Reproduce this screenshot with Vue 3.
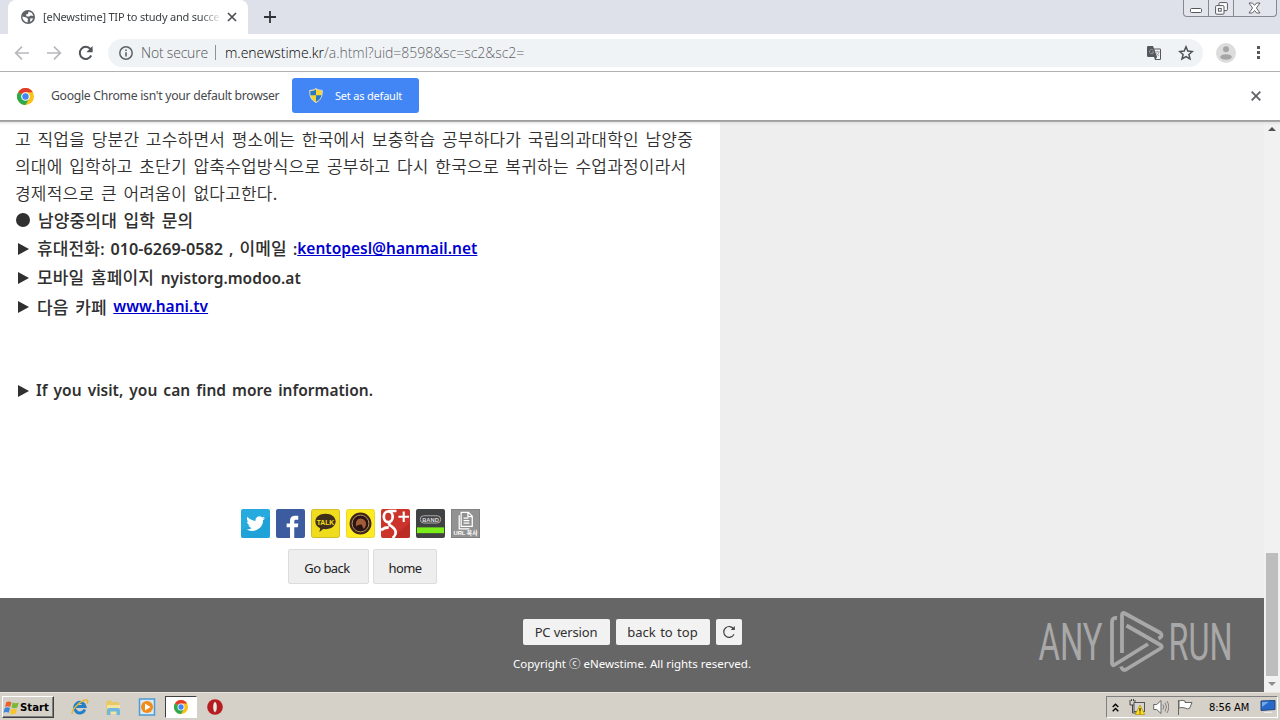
<template>
  <div class="screen">
    <header class="tab-strip">
      <div class="tab">
        <svg class="globe" viewBox="0 0 16 16" width="16" height="16">
          <circle cx="8" cy="8" r="7" fill="#5f6368" />
          <path d="M8.500 2.600 12 4l1.300 3-2.600-.6-1.500 1.200-2.400-.2-1-1.600 2.300-1zM2.400 7.400l4 1.200 1.800 1.600-.6 1.400.3 2-2.700-.8-2.400-2.600zM10.400 9.200l2.800.2-1.600 2.600-1.600.8z" fill="#fff" />
        </svg>
        <span class="tab-title">[eNewstime] TIP to study and succe</span>
        <svg class="tab-close" viewBox="0 0 10 10" width="10" height="10">
          <path d="M1 1l8 8M9 1l-8 8" stroke="#4b4e52" stroke-width="1.7" />
        </svg>
      </div>
      <svg class="new-tab" viewBox="0 0 12 12" width="12" height="12">
        <path d="M6 0v12M0 6h12" stroke="#303338" stroke-width="1.8" />
      </svg>
      <div class="window-buttons">
        <span class="win-btn min">
          <svg viewBox="0 0 12 5" width="12" height="5"><rect x=".5" y=".5" width="11" height="4" rx="1" fill="#fff" stroke="#53565d" /></svg>
        </span>
        <span class="win-btn max">
          <svg viewBox="0 0 13 13" width="13" height="13">
            <rect x="4" y=".6" width="8.400" height="8" rx="1" fill="#fff" stroke="#53565d" />
            <rect x=".6" y="3.600" width="8.400" height="8.600" rx="1" fill="#fff" stroke="#53565d" />
            <rect x="3.400" y="6.400" width="2.800" height="2.800" fill="#fff" stroke="#53565d" />
          </svg>
        </span>
        <span class="win-btn cls">
          <svg viewBox="0 0 13 12" width="13" height="12">
            <path d="M1 1h3.400l2.100 2.400L8.600 1H12L8.400 6l3.600 5H8.600L6.500 8.500 4.400 11H1l3.600-5z" fill="#fff" stroke="#53565d" stroke-width=".9" />
          </svg>
        </span>
      </div>
    </header>

    <div class="toolbar">
      <svg class="nav-icon" viewBox="0 0 16 16" width="16" height="16">
        <path d="M15 8H2M8 1.700 1.700 8 8 14.300" fill="none" stroke="#b6b8bb" stroke-width="1.700" />
      </svg>
      <svg class="nav-icon" viewBox="0 0 16 16" width="16" height="16">
        <path d="M1 8h13M8 1.700 14.300 8 8 14.300" fill="none" stroke="#b6b8bb" stroke-width="1.700" />
      </svg>
      <svg class="nav-icon" viewBox="0 0 16 16" width="16" height="16">
        <path d="M13.200 10.500A6 6 0 1 1 12.400 4" fill="none" stroke="#505357" stroke-width="2" />
        <path d="M14.600 1v6.200H8.400z" fill="#505357" />
      </svg>
      <div class="omnibox">
        <svg viewBox="0 0 14 14" width="14" height="14">
          <circle cx="7" cy="7" r="6.200" fill="none" stroke="#5f6368" stroke-width="1.500" />
          <path d="M7 6.200v4.200M7 3.400v1.600" stroke="#5f6368" stroke-width="1.600" />
        </svg>
        <span class="not-secure">Not secure</span>
        <span class="divider"></span>
        <span class="url"><b>m.enewstime.kr</b><i>/a.html?uid=8598&amp;sc=sc2&amp;sc2=</i></span>
        <svg class="translate" viewBox="0 0 14 14" width="14" height="14">
          <path d="M1.200 0H6l1 2.600h5.800a1.200 1.200 0 0 1 1.200 1.200v9A1.200 1.200 0 0 1 12.800 14H8l-1-3H1.200A1.200 1.200 0 0 1 0 9.800V1.200A1.200 1.200 0 0 1 1.200 0z" fill="#54575c" />
          <path d="M7.400 3.500H13V13H8.800l1.300-2z" fill="#f1f3f4" />
          <path d="M6.200 4.200a2.100 2.100 0 1 0 .5 1.900H4.800M8.200 5.800h4.400M10.400 4.800v1M12 6c-.5 2-1.500 3-3 4M9 6.500c.5 1.500 1.500 2.500 3 3.500" fill="none" stroke="#999ca0" stroke-width=".9" />
        </svg>
        <svg class="star" viewBox="0 0 16 16" width="16" height="16">
          <path d="M8 1.800l1.800 4.300 4.600.4-3.500 3 1.100 4.500L8 11.600 4 14l1.100-4.500-3.500-3 4.600-.4z" fill="none" stroke="#4d5156" stroke-width="1.500" />
        </svg>
      </div>
      <svg class="avatar" viewBox="0 0 20 20" width="20" height="20">
        <circle cx="10" cy="10" r="10" fill="#dcdcdc" />
        <circle cx="10" cy="6.200" r="3" fill="#a5a5a5" />
        <ellipse cx="10" cy="14" rx="5.800" ry="2.800" fill="#a5a5a5" />
      </svg>
      <svg class="menu-dots" viewBox="0 0 3 13" width="3" height="13">
        <path d="M0 0h3v3H0zM0 5h3v3H0zM0 10h3v3H0z" fill="#55585c" />
      </svg>
    </div>

    <div class="infobar">
      <svg viewBox="0 0 18 18" width="17" height="17">
        <circle cx="9" cy="9" r="9" fill="#fbc116" />
        <path d="M9 9 1.200 4.500A9 9 0 0 1 16.800 4.500H9z" fill="#e33b2e" />
        <path d="M1.200 4.500A9 9 0 0 0 9 18l3.900-6.800L9 9z" fill="#2da94f" />
        <circle cx="9" cy="9" r="4.600" fill="#fff" />
        <circle cx="9" cy="9" r="3.400" fill="#4285f4" />
      </svg>
      <span class="infobar-text">Google Chrome isn't your default browser</span>
      <button class="default-btn">
        <svg viewBox="0 0 14 15" width="14" height="15">
          <path d="M7 .5C5 2 3 2.300.800 2.300.500 8 2 12 7 14.500 12 12 13.500 8 13.200 2.300 11 2.300 9 2 7 .500z" fill="#f7d42f" stroke="#d6dbe0" />
          <path d="M7 1.600V7.300H1.500C1.200 6 1.300 4.500 1.400 3.200 3.600 3 5.400 2.700 7 1.600zM7 7.300h5.600C12 10 10 12.300 7 13.800z" fill="#2878c8" />
        </svg>
        <span>Set as default</span>
      </button>
      <svg class="infobar-close" viewBox="0 0 10 10" width="10" height="10">
        <path d="M.7.700l8.600 8.600M9.300.700.700 9.300" stroke="#606367" stroke-width="1.900" />
      </svg>
    </div>

    <div class="viewport">
      <div class="page">
        <div class="page-body">
          <main class="article">
            <p class="line">고 직업을 당분간 고수하면서 평소에는 한국에서 보충학습 공부하다가 국립의과대학인 남양중</p>
            <p class="line">의대에 입학하고 초단기 압축수업방식으로 공부하고 다시 한국으로 복귀하는 수업과정이라서</p>
            <p class="line">경제적으로 큰 어려움이 없다고한다.</p>
            <p class="line bold first"><span class="bullet"></span><span>남양중의대 입학 문의</span></p>
            <p class="line bold tall"><span class="arrow"></span><span>휴대전화<em>: </em><em class="phone">010-6269-0582</em><em> , </em>이메일<em> :</em></span><a>kentopesl@hanmail.net</a></p>
            <p class="line bold tall"><span class="arrow"></span><span>모바일 홈페이지 <em>nyistorg.modoo.at</em></span></p>
            <p class="line bold tall"><span class="arrow"></span><span>다음 카페 </span><a>www.hani.tv</a></p>
            <p class="line bold tall visit"><span class="arrow"></span><em>If you visit, you can find more information.</em></p>

            <div class="share">
              <svg v-for="item in shares" :key="item" class="share-icon" viewBox="0 0 30 30" width="29" height="29">
                <template v-if="item === 'twitter'">
                  <rect width="30" height="30" rx="2" fill="#27abdf" />
                  <path d="M0 22 30 8v20a2 2 0 0 1-2 2H2a2 2 0 0 1-2-2z" fill="#189ad2" opacity=".5" />
                  <path d="M24 9.300c-.8.400-1.500.500-2.300.600.8-.5 1.400-1.200 1.600-2.100-.7.400-1.500.7-2.400.9a4.100 4.100 0 0 0-6.900 3.600c-3.300-.2-6.300-1.700-8.300-4.200-1.100 2-.4 4.100 1.200 5.300-.6 0-1.200-.2-1.700-.5 0 1.900 1.400 3.500 3.200 3.900-.6.200-1.200.2-1.800.1.500 1.500 2 2.700 3.700 2.700A8 8 0 0 1 4.500 21c6.700 4.200 17.200.5 17.400-9.500.8-.6 1.500-1.300 2.100-2.200z" transform="translate(1)" fill="#fff" />
                </template>
                <template v-else-if="item === 'facebook'">
                  <rect width="30" height="30" rx="2" fill="#3d5b9f" />
                  <path d="M14.500 30V19H11v-4h3.500v-2.800c0-3.400 2-5.200 5.200-5.200H23v4h-2.300c-1.400 0-1.800.7-1.800 1.900V15h4.200l-.6 4h-3.600v11z" fill="#fff" />
                </template>
                <template v-else-if="item === 'talk'">
                  <rect x=".5" y=".5" width="29" height="29" rx="2" fill="#f0dc1e" stroke="#d0bb20" />
                  <path d="M15 5c-6.200 0-10.500 3.500-10.500 8 0 3.500 2 5.700 5 6.800l-.8 4 4-3c7.500.8 12.800-2.800 12.800-7.800 0-4.500-4.300-8-10.500-8z" fill="#40301b" />
                  <text x="15" y="16.500" text-anchor="middle" class="talk-label">TALK</text>
                </template>
                <template v-else-if="item === 'story'">
                  <rect x=".5" y=".5" width="29" height="29" rx="2" fill="#ffec20" stroke="#e8d538" />
                  <circle cx="15" cy="15" r="11.300" fill="#40251c" />
                  <circle cx="15" cy="15" r="8.700" fill="#2a1512" stroke="#b79463" stroke-width="1" />
                  <path d="M10.500 18c-1-5 1.500-8.500 5.500-8 3.500.5 5.500 4 4.500 7-.5 2-1.500 3-2.500 3.500l-1.500-4c-2-1-4 0-6 1.500z" fill="#a35c38" />
                </template>
                <template v-else-if="item === 'gplus'">
                  <rect width="30" height="30" rx="2" fill="#cc342b" />
                  <path d="M12 30h16a2 2 0 0 0 2-2V14z" fill="#af2821" opacity=".6" />
                  <g fill="none" stroke="#fff">
                    <ellipse cx="7.500" cy="8" rx="4.600" ry="5.600" stroke-width="2.800" />
                    <path d="M8 2h8M10 13c-3 2-2 3 1 5 6 4 5 9 1 12M8 19c-4 0-6 1-8 3" stroke-width="2.700" />
                    <path d="M23.500 2.500v11M18 8h11" stroke-width="2.200" />
                  </g>
                </template>
                <template v-else-if="item === 'band'">
                  <rect width="30" height="30" rx="2" fill="#414244" />
                  <rect x="1" y="19" width="28" height="6" fill="#7bed18" />
                  <rect x="4.500" y="7" width="21" height="7.500" rx="3.500" fill="none" stroke="#bbb" stroke-width=".9" />
                  <text x="15" y="13" text-anchor="middle" class="band-label">BAND</text>
                </template>
                <template v-else>
                  <rect x=".5" y=".5" width="29" height="29" fill="#929292" stroke="#808080" />
                  <path d="M10.500 3.500h7.500l4 4v10.500h-11.500zM8.500 6.500v14h10.500M17.500 3.500v4.500h4.500M13 9.500h5M13 12h6M13 14.500h6" fill="none" stroke="#fff" stroke-width="1.300" />
                  <text x="15" y="27" text-anchor="middle" class="url-label">URL 복사</text>
                </template>
              </svg>
            </div>

            <div class="page-buttons">
              <button class="plain back">Go back</button>
              <button class="plain home">home</button>
            </div>
          </main>
        </div>

        <footer class="footer">
          <div class="footer-buttons">
            <button class="foot-btn pc">PC version</button>
            <button class="foot-btn top">back to top</button>
            <button class="foot-btn reload">
              <svg viewBox="0 0 14 14" width="14" height="14">
                <path d="M12 9.300A5.400 5.400 0 1 1 11.700 4" fill="none" stroke="#444" stroke-width="1.200" />
                <path d="M12.800 1v4H8.800z" fill="#444" />
              </svg>
            </button>
          </div>
          <p class="copyright">Copyright ⓒ eNewstime. All rights reserved.</p>
          <svg class="watermark" viewBox="0 0 200 70" width="200" height="70">
            <text x="3.500" y="54.500" textLength="64" lengthAdjust="spacingAndGlyphs">ANY</text>
            <text x="133.500" y="54.500" textLength="64" lengthAdjust="spacingAndGlyphs">RUN</text>
            <g fill="none" stroke="#a8a8a8" stroke-width="3.800" stroke-linejoin="round">
              <path d="M82 13q-5-.5-5 4v41q0 3.500 3 1.500l33-20.500" />
              <path d="M87 48V10q0-3 3-1.500L125.500 28q3 3-2 5.500" />
              <path d="M91.500 20.500 125.500 40q2.500 1.500 0 3.500L91 64.500q-3.500 1.500-5-3" />
            </g>
          </svg>
        </footer>
      </div>
      <div class="scrollbar">
        <svg class="sb-arrow" viewBox="0 0 8 4" width="8" height="4"><path d="M0 4 4 0l4 4z" fill="#505050" /></svg>
        <div class="thumb"></div>
        <svg class="sb-arrow" viewBox="0 0 8 4" width="8" height="4"><path d="M0 0l4 4 4-4z" fill="#8d8d8d" /></svg>
      </div>
      <div class="top-shadow"></div>
    </div>

    <div class="taskbar">
      <button class="start">
        <svg viewBox="0 0 16 14" width="17" height="15">
          <path d="M3 2q2.500-1.500 5 0L6.800 6.500q-2.400-1.300-4.800 0z" fill="#e8602c" />
          <path d="M9 2.300q2.500 1.500 5.800 0L13.500 7q-2.800 1.300-5.500 0z" fill="#78b83a" />
          <path d="M1.700 7.500q2.500-1.300 4.900 0L5.400 12q-2.500-1.400-5 0z" fill="#3f84d8" />
          <path d="M7.600 8q2.700 1.400 5.600 0L12 12.600q-2.800 1.400-5.500 0z" fill="#f6c52c" />
        </svg>
        <span>Start</span>
      </button>
      <div class="launch">
        <svg viewBox="0 0 18 18" width="18" height="18">
          <path d="M13.800 11.500A5.300 5.300 0 1 1 14 8.500H5" fill="none" stroke="#247fc9" stroke-width="3" />
          <path d="M1.500 16C-.5 13 8 3.500 14.500 2c3-.6 2.500 2 1.500 3.500" fill="none" stroke="#e3b832" stroke-width="1.500" />
        </svg>
        <svg viewBox="0 0 18 18" width="18" height="18">
          <path d="M2 3.500 7 2l1 2h7l1 12H2z" fill="#e9c965" />
          <path d="M3 7h13v9H3z" fill="#f5e3a0" />
          <path d="M3 17v-5q0-2 2-2h9q2 0 2 2v5h-3.500v-3.500h-6V17z" fill="#70b7df" />
        </svg>
        <svg class="media" viewBox="0 0 18 18" width="18" height="18">
          <rect x="1.500" y="1" width="15" height="16" fill="#d8eaf7" stroke="#4b9bd6" stroke-width="1.500" />
          <circle cx="9" cy="9" r="6" fill="#f38b19" />
          <path d="M7 5.500 12.500 9 7 12.500z" fill="#fff" />
        </svg>
        <span class="active-task">
          <svg viewBox="0 0 18 18" width="14" height="14">
            <circle cx="9" cy="9" r="9" fill="#fbc116" />
            <path d="M9 9 1.200 4.500A9 9 0 0 1 16.800 4.500H9z" fill="#e33b2e" />
            <path d="M1.200 4.500A9 9 0 0 0 9 18l3.900-6.800L9 9z" fill="#2da94f" />
            <circle cx="9" cy="9" r="4.500" fill="#fff" />
            <circle cx="9" cy="9" r="3.400" fill="#4285f4" />
          </svg>
        </span>
        <svg viewBox="0 0 16 16" width="16" height="16">
          <circle cx="8" cy="8" r="7.800" fill="#b91b1e" />
          <ellipse cx="8" cy="8" rx="2.200" ry="5.500" fill="#f1e9e6" stroke="#7b0b10" stroke-width=".6" />
        </svg>
      </div>
      <div class="tray">
        <svg class="chevrons" viewBox="0 0 7 9" width="7" height="9">
          <path d="M.7 4 3.500 1.200 6.300 4M.7 8.200 3.500 5.400l2.800 2.800" fill="none" stroke="#000" stroke-width="1.400" />
        </svg>
        <svg class="network" viewBox="0 0 16 16" width="16" height="16">
          <path d="M1 1v5h5V1M3.500 6v8H7M2.500 0v2M4.500 0v2" fill="none" stroke="#444" stroke-width="1" />
          <rect x="5" y="3.500" width="10.500" height="9" fill="#d5d5d5" stroke="#555" />
          <path d="M11 6 15.700 15.500H6.300z" fill="#ffdf22" stroke="#b89600" stroke-width=".8" />
          <path d="M11 9v3.500M11 13.500v1" stroke="#222" stroke-width="1.200" />
        </svg>
        <svg class="speaker" viewBox="0 0 16 16" width="16" height="16">
          <path d="M.7 5.500h3L8 1.500v13l-4.300-4h-3z" fill="#fff" stroke="#666" />
          <path d="M10 5.500q1.500 2.500 0 5M12 3.500q3 4.500 0 9M14 2q3.500 6 0 12" fill="none" stroke="#777" stroke-width=".9" />
        </svg>
        <svg class="flag" viewBox="0 0 16 16" width="16" height="16">
          <path d="M1.500 1v15M2 2q3-1.500 6 0v1.500h7l-2.500 6q-2 1-4.500-.5-3-1-6 0z" fill="#fff" stroke="#666" />
        </svg>
        <span class="clock">8:56 AM</span>
        <svg class="desktop" viewBox="0 0 16 14" width="16" height="14">
          <path d="M1 1l14-.5v9L1 10.500z" fill="#2768c8" stroke="#24477e" />
          <path d="M2 2l7-.2L2 7z" fill="#71a9ee" />
          <path d="M4 12l8-.5v1.500H4z" fill="#ececec" />
        </svg>
      </div>
    </div>
  </div>
</template>

<script setup>
const shares = ['twitter', 'facebook', 'talk', 'story', 'gplus', 'band', 'copy']
</script>

<style>
body {
  margin: 0;
  overflow: hidden;
}
</style>

<style scoped>
.screen {
  width: 1280px;
  height: 720px;
  display: flex;
  flex-direction: column;
  overflow: hidden;
  background: #fff;
  font-family: "Noto Sans", "Noto Sans CJK KR", sans-serif;
  white-space: nowrap;
}

svg {
  display: block;
  flex: none;
}

button {
  box-sizing: border-box;
  padding: 0;
  font-family: inherit;
}

/* Tab strip */
.tab-strip {
  height: 34px;
  display: flex;
  flex: none;
  background: #dee1e9;
}

.tab {
  box-sizing: border-box;
  width: 240px;
  height: 34px;
  margin-left: 8px;
  padding: 0 11px 0 12px;
  display: flex;
  align-items: center;
  background: #fff;
  border-radius: 8px 8px 0 0;
}

.tab-title {
  width: 176px;
  margin: 0 0 1px 7px;
  font-size: 11px;
  letter-spacing: -0.2px;
  color: #3c4043;
  mask-image: linear-gradient(to right, #000 158px, transparent 178px);
}

.tab-close {
  margin-left: 8px;
}

.new-tab {
  margin: 11px 0 0 16px;
}

.window-buttons {
  box-sizing: border-box;
  width: 94px;
  height: 17px;
  margin: 0 3px 0 auto;
  display: flex;
  border: 1px solid #85888f;
  border-top: 0;
  border-radius: 0 0 4px 4px;
  background: #e2e5eb;
}

.win-btn {
  display: flex;
  justify-content: center;
  align-items: center;
}

.win-btn.min {
  width: 24px;
  padding-top: 4px;
  border-right: 1px solid #85888f;
}

.win-btn.max {
  width: 24px;
  border-right: 1px solid #85888f;
}

.win-btn.cls {
  flex: 1;
  padding-right: 2px;
}

/* Toolbar */
.toolbar {
  box-sizing: border-box;
  height: 38px;
  flex: none;
  display: flex;
  align-items: center;
  padding-left: 14px;
  border-bottom: 1px solid #b1b1b3;
}

.nav-icon {
  margin-right: 16px;
}

.omnibox {
  box-sizing: border-box;
  width: 1095px;
  height: 28px;
  margin-left: -2px;
  padding: 0 9px 0 11px;
  display: flex;
  align-items: center;
  border-radius: 14px;
  background: #f0f3f5;
  font-family: "Open Sans", "Noto Sans", sans-serif;
  font-weight: 300;
  font-size: 14px;
}

.not-secure {
  width: 67px;
  margin: 0 0 1px 8px;
  letter-spacing: -0.2px;
  color: #505357;
}

.divider {
  width: 1px;
  height: 15px;
  margin: 0 9px 0 7px;
  background: #8e9195;
}

.url {
  margin-bottom: 1px;
  letter-spacing: -0.03px;
}

.url b {
  font-weight: 300;
  color: #000;
}

.url i {
  font-style: normal;
  color: #606367;
}

.translate {
  margin-left: auto;
}

.star {
  margin-left: 17px;
}

.avatar {
  margin-left: 13px;
}

.menu-dots {
  margin-left: 21px;
}

/* Infobar */
.infobar {
  box-sizing: border-box;
  height: 49px;
  flex: none;
  display: flex;
  align-items: center;
  padding: 0 19px 0 17px;
}

.infobar-text {
  width: 241px;
  margin: 0 0 2px 17px;
  font-size: 12.2px;
  letter-spacing: -0.28px;
  color: #46494d;
}

.default-btn {
  width: 127px;
  height: 35px;
  display: flex;
  align-items: center;
  margin-bottom: 2px;
  padding-left: 17px;
  border: 0;
  border-radius: 3px;
  background: #4286f5;
  color: #fff;
  font-size: 11px;
  letter-spacing: -0.2px;
}

.default-btn span {
  margin: 0 0 1px 12px;
}

.infobar-close {
  margin: 0 0 2px auto;
}

/* Page */
.viewport {
  position: relative;
  height: 571px;
  flex: none;
  display: flex;
}

.top-shadow {
  position: absolute;
  top: -1px;
  left: 0;
  width: 1280px;
  height: 5px;
  background: linear-gradient(to bottom, #99999b 0, #a9a9ab 30%, rgba(210, 210, 210, 0.5) 45%, rgba(255, 255, 255, 0));
}

.page {
  width: 1264px;
  height: 571px;
  display: flex;
  flex-direction: column;
}

.page-body {
  height: 477px;
  background: #eee;
}

.article {
  box-sizing: border-box;
  width: 720px;
  height: 477px;
  padding: 4px 0 0 15px;
  background: #fff;
  color: #303030;
}

.line {
  height: 27px;
  margin: 0;
  display: flex;
  align-items: center;
  line-height: 27px;
  font-family: "Noto Sans CJK KR", sans-serif;
  font-size: 17px;
  font-weight: 350;
  letter-spacing: 0.22px;
  word-spacing: 2.6px;
  white-space: pre;
}

.bold {
  font-weight: 500;
  letter-spacing: 0.15px;
}

.first {
  margin-bottom: 1px;
}

.tall {
  height: 29px;
}

.visit {
  margin-top: 55px;
}

.bullet {
  width: 14px;
  height: 14px;
  margin: 0 8px 0 1px;
  border-radius: 50%;
  background: #303030;
}

.arrow {
  width: 0;
  height: 0;
  margin: 0 8px 0 3px;
  border-left: 11px solid #303030;
  border-top: 6.5px solid transparent;
  border-bottom: 6.5px solid transparent;
}

.visit .arrow {
  margin-right: 7px;
}

.bold em,
.bold a {
  font-family: "Noto Sans", sans-serif;
  font-size: 15.5px;
  font-style: normal;
  font-weight: 600;
  letter-spacing: 0.02px;
  word-spacing: 2px;
}

.bold .phone {
  font-size: 16.2px;
}

.bold a {
  color: #0000d0;
  text-decoration: underline;
}

.share {
  display: flex;
  gap: 6px;
  margin: 104px 0 0 226px;
}

.talk-label {
  font: 700 7px "Liberation Sans", sans-serif;
  fill: #f7e01a;
}

.band-label {
  font: 700 6px "Liberation Sans", sans-serif;
  fill: #ddd;
}

.url-label {
  font: 700 6px "Liberation Sans", "Noto Sans CJK KR", sans-serif;
  fill: #fff;
}

.page-buttons {
  display: flex;
  gap: 4px;
  margin: 11px 0 0 273px;
}

.plain {
  height: 35px;
  padding-top: 2px;
  border: 1px solid #dcdcdc;
  border-radius: 2px;
  background: #eee;
  color: #222;
  font-size: 13px;
  letter-spacing: -0.55px;
}

.back {
  width: 81px;
  padding-right: 3px;
}

.home {
  width: 64px;
}

/* Footer */
.footer {
  position: relative;
  box-sizing: border-box;
  height: 94px;
  padding-top: 21px;
  background: #666;
}

.footer-buttons {
  display: flex;
  justify-content: center;
  gap: 6px;
}

.foot-btn {
  height: 26px;
  display: flex;
  justify-content: center;
  align-items: center;
  border: 0;
  border-radius: 2px;
  background: #f2f2f2;
  color: #303030;
  font-size: 13px;
}

.pc {
  width: 87px;
  letter-spacing: -0.15px;
}

.top {
  width: 94px;
  word-spacing: 1px;
}

.reload {
  width: 26px;
}

.copyright {
  margin: 10px 0 0;
  text-align: center;
  line-height: 18px;
  font-size: 11.5px;
  color: #fff;
}

.watermark {
  position: absolute;
  left: 1035px;
  top: 7px;
  overflow: visible;
}

.watermark text {
  font-family: Roboto, sans-serif;
  font-weight: 400;
  font-size: 51px;
  fill: #a8a8a8;
}

/* Scrollbar */
.scrollbar {
  width: 16px;
  display: flex;
  flex-direction: column;
  align-items: center;
  background: #f1f1f1;
}

.sb-arrow {
  margin-top: 6px;
}

.thumb {
  width: 12px;
  height: 123px;
  margin-top: 422px;
  background: #bdbdbd;
}

/* Taskbar */
.taskbar {
  box-sizing: border-box;
  height: 28px;
  flex: none;
  display: flex;
  align-items: center;
  padding: 1px 2px 0 2px;
  border-top: 1px solid #e8e5df;
  background: #d5d0c8;
}

.start {
  width: 52px;
  height: 22px;
  display: flex;
  align-items: center;
  border: 1px solid;
  border-color: #fff #404040 #404040 #fff;
  box-shadow: inset -1px -1px #808080;
  background: #d5d0c8;
  color: #000;
  font: 700 11.3px "DejaVu Sans Condensed", "DejaVu Sans", sans-serif;
}

.launch {
  display: flex;
  align-items: center;
  margin-left: 17px;
  gap: 15px;
}

.media {
  margin-left: 1px;
}

.active-task {
  box-sizing: border-box;
  width: 32px;
  height: 22px;
  margin: 0 -5px 0 -6px;
  display: flex;
  align-items: center;
  justify-content: center;
  border: 1px solid;
  border-color: #404040 #fff #fff #404040;
  background: #fff;
}

.tray {
  box-sizing: border-box;
  width: 172px;
  height: 22px;
  margin-left: auto;
  display: flex;
  align-items: center;
  padding: 0 0 0 5px;
  border: 1px solid;
  border-color: #808080 #fff #fff #808080;
}

.network {
  margin-left: 10px;
}

.speaker {
  margin-left: 8px;
}

.flag {
  margin-left: 8px;
}

.clock {
  width: 42px;
  margin: 0 9px 0 16px;
  font: 11px "DejaVu Sans Condensed", "DejaVu Sans", sans-serif;
  letter-spacing: -0.05px;
  color: #000;
}
</style>
